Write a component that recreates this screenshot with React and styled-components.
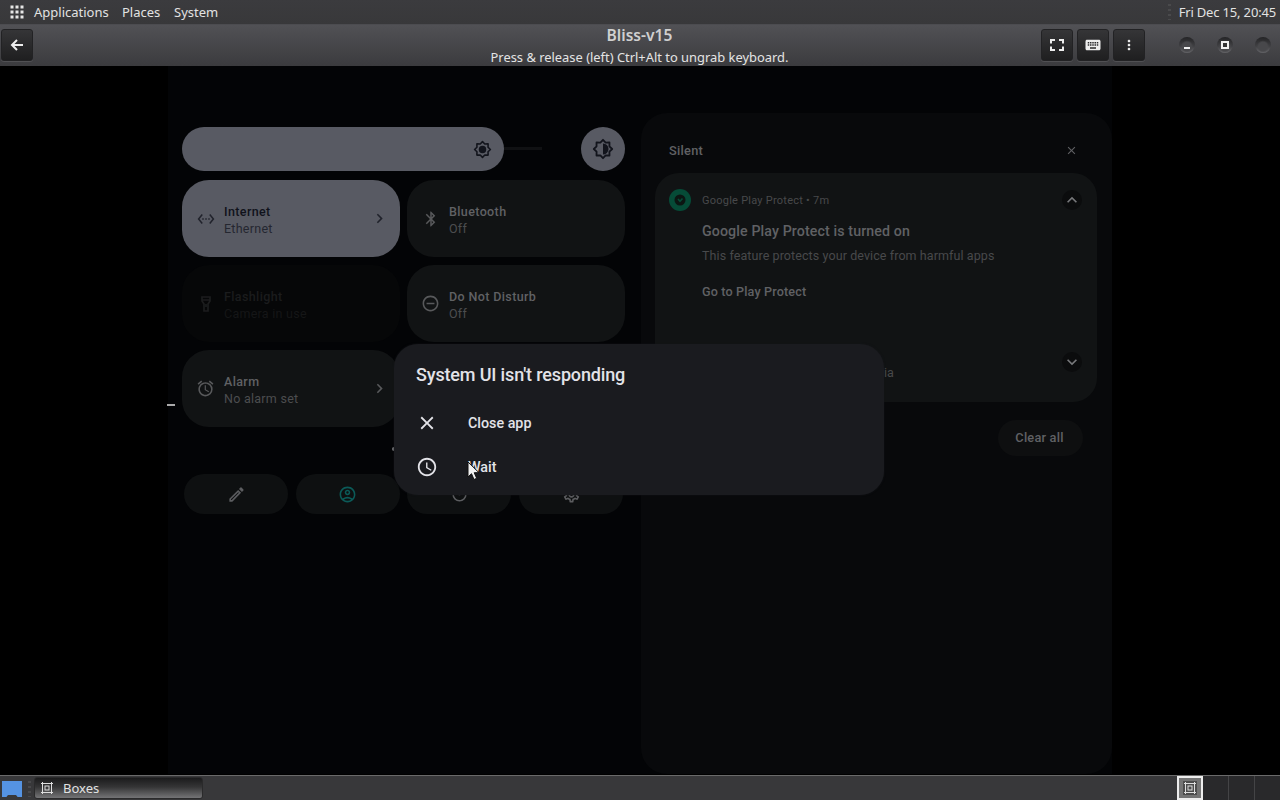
import React from 'react'
import styled, { createGlobalStyle } from 'styled-components'
import {
  MdMoreVert,
  MdKeyboard,
  MdSettingsEthernet,
  MdBluetooth,
  MdRemoveCircleOutline,
  MdAlarm,
  MdOutlineModeEdit,
  MdOutlineAccountCircle,
  MdPowerSettingsNew,
  MdOutlineSettings,
  MdAccessTime,
  MdClose,
  MdChevronRight,
  MdExpandLess,
  MdExpandMore
} from 'react-icons/md'

const ui = {
  desktop: "'Noto Sans', sans-serif",
  android: "Roboto, sans-serif",
  active: '#585a63',
  tile: '#111314',
  panel: '#08090b',
  dim: '#606164',
  dimmer: '#48494b'
}

const GlobalStyle = createGlobalStyle`
  * { box-sizing: border-box; }
  body {
    margin: 0;
    background: #000;
    overflow: hidden;
  }
  svg { display: block; flex: none; }
`

const Desktop = styled.div`
  width: 1280px;
  height: 800px;
  display: flex;
  flex-direction: column;
  font-family: ${ui.desktop};
  white-space: nowrap;
  background: #000;
`

const TopBar = styled.div`
  height: 24px;
  flex: none;
  display: flex;
  align-items: center;
  padding: 0 4px 0 10px;
  background: linear-gradient(#3b3b3e, #38383a);
  color: #e2e2e2;
  font-size: 13px;
  line-height: 24px;
`

const MenuLabel = styled.span`
  width: ${p => p.$width}px;
  margin-left: ${p => p.$gap}px;
`

const Clock = styled.span`
  letter-spacing: -0.17px;
`

const Grip = styled.i`
  width: 3px;
  height: 16px;
  flex: none;
  margin: ${p => p.$margin || 0};
  background: repeating-linear-gradient(#4a4a4c 0 2px, transparent 2px 5px);
`

const WindowHeader = styled.header`
  height: 42px;
  flex: none;
  display: grid;
  grid-template-columns: 1fr 400px 1fr;
  align-items: start;
  border-top: 1px solid #4c4c50;
  background: linear-gradient(#515155, #3b3b3e);
  color: #e4e4e4;
`

const Titles = styled.div`
  text-align: center;
  padding-right: 1px;
  h1 {
    margin: 0;
    font-size: 15.6px;
    font-weight: 600;
    line-height: 20px;
    color: #d0d0d0;
  }
  p {
    margin: 3px 0 0;
    font-size: 12.9px;
    line-height: 19px;
  }
`

const HeaderSide = styled.div`
  display: flex;
  align-items: center;
  padding-top: 4px;
  padding-left: ${p => p.$left}px;
  gap: 4px;
`

const ToolButton = styled.button`
  width: 32px;
  height: 32px;
  flex: none;
  display: flex;
  align-items: center;
  justify-content: center;
  padding: 0;
  border: 1px solid #222224;
  border-radius: 3px;
  background: linear-gradient(#353537, #1f1f20);
  box-shadow: 0 1px 0 #505053;
  color: #ededed;
`

const WindowButton = styled.span`
  width: 16px;
  height: 16px;
  display: flex;
  align-items: center;
  justify-content: center;
  margin-left: ${p => p.$left}px;
  border-radius: 50%;
  background: radial-gradient(circle at 50% 60%, #48484b 35%, transparent 50%), linear-gradient(#242426, #424245 60%, #69696d);
`

const WindowMark = styled.i`
  width: ${p => (p.$square ? 8 : 6)}px;
  height: ${p => (p.$square ? 8 : 2)}px;
  margin-top: ${p => (p.$square ? 0 : 6)}px;
  border: ${p => (p.$square ? 2.5 : 1)}px solid #f0f0f0;
  background: #333;
`

const Stage = styled.main`
  height: 709px;
  flex: none;
  position: relative;
  display: flex;
  justify-content: center;
  font-family: ${ui.android};
`

const Screen = styled.div`
  width: 944px;
  height: 708px;
  display: flex;
  background: #030406;
`

const QuickSettings = styled.section`
  width: 473px;
  flex: none;
  padding: 61px 16px 0 14px;
`

const BrightnessRow = styled.div`
  display: flex;
  align-items: center;
  height: 44px;
  margin-bottom: 9px;
`

const Slider = styled.div`
  width: 322px;
  height: 44px;
  display: flex;
  align-items: center;
  justify-content: flex-end;
  padding-right: 12.5px;
  border-radius: 22px;
  background: ${ui.active};
  color: #12141c;
`

const Track = styled.div`
  width: 38px;
  height: 3px;
  margin: 0 auto 1px 0;
  background: #101113;
`

const AutoButton = styled.div`
  width: 44px;
  height: 44px;
  display: flex;
  align-items: center;
  justify-content: center;
  border-radius: 50%;
  background: ${ui.active};
  color: #12141c;
`

const Tiles = styled.div`
  display: grid;
  grid-template-columns: 217.5px 217.5px;
  grid-auto-rows: 77px;
  gap: 8px 7.5px;
`

const tones = {
  on: { bg: ui.active, title: '#10121b', sub: '#252731', icon: '#20222b' },
  off: { bg: ui.tile, title: ui.dim, sub: '#4c4d4f', icon: '#58595b' },
  disabled: { bg: '#060708', title: '#1b1c1d', sub: '#151617', icon: '#1c1d1e' }
}

const TileBox = styled.div`
  display: flex;
  align-items: center;
  padding: 0 11px 0 14px;
  border-radius: 27px;
  background: ${p => tones[p.$tone].bg};
  color: ${p => tones[p.$tone].icon};
`

const TileText = styled.div`
  flex: 1;
  margin-left: 9px;
  padding-top: 2px;
  line-height: 17.5px;
  font-size: 12.5px;
  letter-spacing: 0.26px;
  color: ${p => tones[p.$tone].sub};
  strong {
    display: block;
    padding-top: 1px;
    margin-bottom: -1px;
    font-weight: 500;
    font-size: 12.5px;
    letter-spacing: 0.38px;
    color: ${p => tones[p.$tone].title};
  }
`

const TileIcon = styled.span`
  width: 19px;
  display: flex;
  justify-content: center;
`

const PageDots = styled.div`
  height: 47px;
  padding: 20px 0 0 210px;
  &::before {
    content: '';
    display: block;
    width: 4px;
    height: 4px;
    border-radius: 50%;
    background: #77787b;
  }
`

const Footer = styled.div`
  display: grid;
  grid-template-columns: repeat(4, 104px);
  gap: 7.7px;
  padding-left: 2px;
`

const FooterButton = styled.div`
  height: 40px;
  display: flex;
  align-items: center;
  justify-content: center;
  border-radius: 20px;
  background: #0e1011;
  color: ${p => p.$color || '#5c5d60'};
`

const Shade = styled.section`
  flex: 1;
  margin-top: 47px;
  padding: 13px 15px 0 14px;
  border-radius: 26px;
  background: ${ui.panel};
`

const SectionTitle = styled.div`
  height: 47px;
  display: flex;
  align-items: center;
  justify-content: space-between;
  padding: 1px 19px 0 14px;
  color: ${ui.dim};
  font-size: 12.8px;
  font-weight: 500;
  letter-spacing: 0.25px;
`

const Card = styled.article`
  height: 229px;
  padding: 16px 15px 0 14px;
  border-radius: 24px;
  background: ${ui.tile};
  color: ${ui.dim};
`

const CardHeader = styled.div`
  height: 22px;
  display: flex;
  align-items: center;
  font-size: 11px;
  letter-spacing: 0.24px;
  color: ${ui.dimmer};
`

const Badge = styled.span`
  width: 22px;
  height: 22px;
  display: flex;
  align-items: center;
  justify-content: center;
  margin-right: 11px;
  border-radius: 50%;
  background: #064b37;
  color: #0c1512;
`

const Round = styled.span`
  width: 20px;
  height: 20px;
  display: flex;
  align-items: center;
  justify-content: center;
  margin-left: auto;
  border-radius: 50%;
  background: #0b0c0d;
  color: #77787b;
`

const CardBody = styled.div`
  padding: 10px 0 0 33px;
  h2 {
    margin: 0;
    font-size: 14.2px;
    font-weight: 500;
    line-height: 20px;
    letter-spacing: 0.12px;
  }
  p {
    margin: 6px 0 0;
    font-size: 12.5px;
    line-height: 18px;
    letter-spacing: 0.09px;
    color: ${ui.dimmer};
  }
`

const CardAction = styled.div`
  margin-top: 18px;
  font-size: 12.6px;
  font-weight: 500;
  line-height: 18px;
  letter-spacing: 0.15px;
`

const CardFooter = styled.div`
  display: flex;
  align-items: flex-start;
  margin-top: 51px;
  padding-left: 215px;
  font-size: 12.5px;
  color: ${ui.dimmer};
  span:first-child {
    padding-top: 13px;
  }
`

const ClearAll = styled.div`
  width: 85px;
  height: 36px;
  margin: 18px 14px 0 auto;
  padding-right: 2px;
  border-radius: 18px;
  background: #0e0f10;
  color: ${ui.dim};
  font-size: 12.8px;
  font-weight: 500;
  letter-spacing: 0.2px;
  line-height: 36px;
  text-align: center;
`

const Dialog = styled.div`
  position: absolute;
  left: 394px;
  top: 278px;
  width: 490px;
  height: 151px;
  padding: 18px 22px;
  border-radius: 24px;
  background: #1a1b1f;
  box-shadow: 0 0 2px #15161a;
  color: #e3e3e8;
  h2 {
    margin: 0 0 13px;
    font-size: 18px;
    font-weight: 500;
    line-height: 26px;
    letter-spacing: -0.15px;
  }
`

const DialogItem = styled.div`
  height: 44px;
  display: flex;
  align-items: center;
  gap: 30px;
  font-size: 14.3px;
  font-weight: 500;
`

const Pointer = styled.svg`
  position: absolute;
  left: 467px;
  top: 395px;
`

const TextCursor = styled.i`
  position: absolute;
  left: 167px;
  top: 338px;
  width: 8px;
  height: 2px;
  background: #aaa;
`

const Taskbar = styled.footer`
  height: 25px;
  flex: none;
  display: flex;
  border-top: 1px solid #6a6a6a;
  background: #38383a;
  color: #e2e2e2;
`

const ShowDesktop = styled.span`
  width: 20px;
  height: 16px;
  margin: 5px 0 0 2px;
  background: #5593e2;
  clip-path: polygon(0 0, 100% 0, 100% 100%, 78% 100%, 70% 88%, 30% 88%, 22% 100%, 0 100%);
`

const Task = styled.div`
  width: 169px;
  height: 22px;
  display: flex;
  align-items: center;
  gap: 10px;
  margin-top: 1px;
  padding-left: 6px;
  border: 1px solid #2a2a2b;
  border-radius: 3px;
  background: linear-gradient(#1b1b1c, #353536 45%, #747476);
  font-size: 13px;
`

const Workspaces = styled.div`
  display: flex;
  margin-left: auto;
  margin-right: -1px;
`

const Workspace = styled.div`
  width: 26px;
  display: flex;
  align-items: center;
  justify-content: center;
  border-right: 1px solid #444446;
  background: #29292b;
  ${p => p.$current && `
    border: 2px solid #ededed;
    background: #747474;
  `}
`

const IconPlate = styled.span`
  padding: 1px;
  background: #4c4c4c;
`

// eight-pointed sun outline, solid or half filled
const Sun = ({ size, half }) => {
  const points = Array.from({ length: 16 }, (_, i) => {
    const r = i % 2 ? 7.6 : 10
    const a = (i * Math.PI) / 8
    return `${12 + r * Math.cos(a)},${12 + r * Math.sin(a)}`
  }).join(' ')
  return (
    <svg width={size} height={size} viewBox="0 0 24 24">
      <polygon points={points} fill="none" stroke="currentColor" strokeWidth="2" strokeLinejoin="round" />
      {half
        ? <path d="M12 6a6 6 0 0 1 0 12z" fill="currentColor" />
        : <circle cx="12" cy="12" r="4.700" fill="currentColor" />}
    </svg>
  )
}

const AppGrid = () => (
  <svg width="14" height="14" viewBox="0 0 14 14" fill="#e6e6e6">
    {[0, 5, 10].map(y => [0, 5, 10].map(x => (
      <rect key={`${x}-${y}`} x={x + 0.5} y={y + 0.5} width="3" height="3" />
    )))}
  </svg>
)

const BoxesIcon = () => (
  <svg width="12" height="12" viewBox="0 0 12 12" fill="none" stroke="#dedede">
    <path d="M2 1.5h8M2 10.5h8M1.5 2v8M10.5 2v8" />
    <rect x="4" y="4" width="4" height="4" />
    <path d="M0 1.5h3M9 1.5h3M0 10.5h3M9 10.5h3M1.5 0v3M10.5 0v3M1.5 9v3M10.5 9v3" />
  </svg>
)

const BackArrow = () => (
  <svg width="14" height="12" viewBox="0 0 14 12" fill="none" stroke="currentColor" strokeWidth="2">
    <path d="M13 6H2.500M7 1 2 6l5 5" />
  </svg>
)

const Fullscreen = () => (
  <svg width="14" height="12" viewBox="0 0 14 12" fill="none" stroke="currentColor" strokeWidth="2">
    <path d="M5 1H1v3.5M9 1h4v3.5M5 11H1V7.5M9 11h4V7.5" />
  </svg>
)

const Torch = () => (
  <svg width="16" height="18" viewBox="0 0 16 18" fill="none" stroke="currentColor" strokeWidth="1.7">
    <path d="M4 2h8v4l-2 3v7H6V9L4 6zM4 5h8M8 9v3" />
  </svg>
)

const Tile = ({ tone = 'off', icon, title, sub, more }) => (
  <TileBox $tone={tone}>
    <TileIcon>{icon}</TileIcon>
    <TileText $tone={tone}>
      <strong>{title}</strong>
      {sub}
    </TileText>
    {more && <MdChevronRight size={19} />}
  </TileBox>
)

export default function App () {
  return (
    <Desktop>
      <GlobalStyle />
      <TopBar>
        <AppGrid />
        <MenuLabel $width={74} $gap={10}>Applications</MenuLabel>
        <MenuLabel $width={38} $gap={14}>Places</MenuLabel>
        <MenuLabel $width={44} $gap={14}>System</MenuLabel>
        <Grip $margin="0 8px 0 auto" />
        <Clock>Fri Dec 15, 20:45</Clock>
      </TopBar>

      <WindowHeader>
        <HeaderSide $left={1}>
          <ToolButton><BackArrow /></ToolButton>
        </HeaderSide>
        <Titles>
          <h1>Bliss-v15</h1>
          <p>Press &amp; release (left) Ctrl+Alt to ungrab keyboard.</p>
        </Titles>
        <HeaderSide $left={201}>
          <ToolButton><Fullscreen /></ToolButton>
          <ToolButton><MdKeyboard size={18} /></ToolButton>
          <ToolButton><MdMoreVert size={16} /></ToolButton>
          <WindowButton $left={30}><WindowMark /></WindowButton>
          <WindowButton $left={18}><WindowMark $square /></WindowButton>
          <WindowButton $left={18} />
        </HeaderSide>
      </WindowHeader>

      <Stage>
        <Screen>
          <QuickSettings>
            <BrightnessRow>
              <Slider><Sun size={19} /></Slider>
              <Track />
              <AutoButton><Sun size={22} half /></AutoButton>
            </BrightnessRow>
            <Tiles>
              <Tile tone="on" icon={<MdSettingsEthernet size={18} />} title="Internet" sub="Ethernet" more />
              <Tile icon={<MdBluetooth size={18} />} title="Bluetooth" sub="Off" />
              <Tile tone="disabled" icon={<Torch />} title="Flashlight" sub="Camera in use" />
              <Tile icon={<MdRemoveCircleOutline size={19} />} title="Do Not Disturb" sub="Off" />
              <Tile icon={<MdAlarm size={19} />} title="Alarm" sub="No alarm set" more />
            </Tiles>
            <PageDots />
            <Footer>
              <FooterButton><MdOutlineModeEdit size={19} /></FooterButton>
              <FooterButton $color="#0b5a58"><MdOutlineAccountCircle size={19} /></FooterButton>
              <FooterButton><MdPowerSettingsNew size={19} /></FooterButton>
              <FooterButton><MdOutlineSettings size={19} /></FooterButton>
            </Footer>
          </QuickSettings>

          <Shade>
            <SectionTitle>
              Silent
              <MdClose size={13} />
            </SectionTitle>
            <Card>
              <CardHeader>
                <Badge>
                  <svg width="12" height="12" viewBox="0 0 12 12">
                    <circle cx="6" cy="6" r="5.5" fill="currentColor" />
                    <path d="m4 5 2 2.200L8.500 4.500" fill="none" stroke="#064b37" strokeWidth="1.600" />
                  </svg>
                </Badge>
                Google Play Protect • 7m
                <Round><MdExpandLess size={20} /></Round>
              </CardHeader>
              <CardBody>
                <h2>Google Play Protect is turned on</h2>
                <p>This feature protects your device from harmful apps</p>
                <CardAction>Go to Play Protect</CardAction>
              </CardBody>
              <CardFooter>
                <span>ia</span>
                <Round><MdExpandMore size={20} /></Round>
              </CardFooter>
            </Card>
            <ClearAll>Clear all</ClearAll>
          </Shade>
        </Screen>

        <TextCursor />
        <Dialog>
          <h2>System UI isn't responding</h2>
          <DialogItem><MdClose size={22} />Close app</DialogItem>
          <DialogItem><MdAccessTime size={22} />Wait</DialogItem>
        </Dialog>
        <Pointer width="14" height="21" viewBox="0 0 14 21">
          <path d="M1 1v15l3.500-3.300 2.500 5.800 2.700-1.200-2.500-5.600H12z" fill="#f2f2f2" stroke="#111" />
        </Pointer>
      </Stage>

      <Taskbar>
        <ShowDesktop />
        <Grip $margin="5px 3px 0 6px" />
        <Task><BoxesIcon />Boxes</Task>
        <Workspaces>
          <Workspace $current><IconPlate><BoxesIcon /></IconPlate></Workspace>
          <Workspace />
          <Workspace />
          <Workspace />
        </Workspaces>
      </Taskbar>
    </Desktop>
  )
}
